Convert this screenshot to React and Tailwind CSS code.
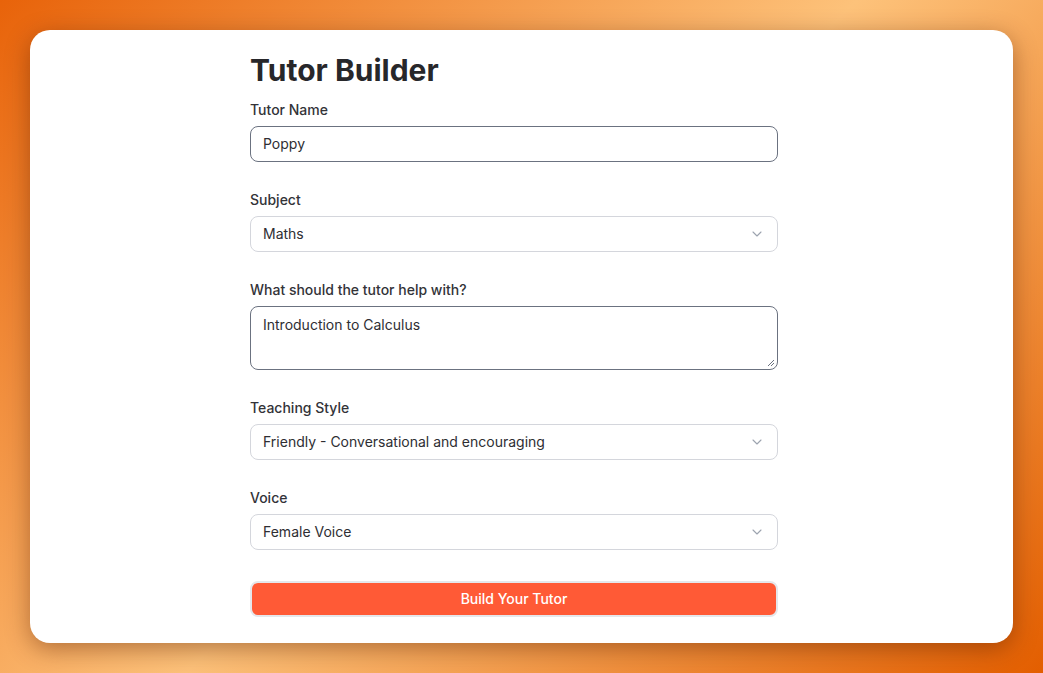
import React from "react";

const font = { fontFamily: "Inter, 'Noto Sans', sans-serif" };

function Chevron() {
  return (
    <svg width="16" height="16" viewBox="0 0 24 24" fill="none" stroke="#9ca3af" strokeWidth="1.6" strokeLinecap="round" strokeLinejoin="round" className="absolute right-[12px] top-1/2 -translate-y-1/2 pointer-events-none">
      <path d="m6 9 6 6 6-6" />
    </svg>
  );
}

function Label({ children }) {
  return <label className="block text-sm leading-5 font-medium text-[#333338] mb-1.5">{children}</label>;
}

function SelectBox({ value }) {
  return (
    <div className="relative h-9 w-full rounded-lg border border-[#d4d6dc] bg-white flex items-center px-3 text-sm text-[#2e2e33]">
      {value}
      <Chevron />
    </div>
  );
}

export default function App() {
  return (
    <div className="w-[1043px] h-[673px] overflow-hidden bg-[linear-gradient(135deg,#e8630a_0%,#fdc27a_50%,#e35e00_100%)] p-[30px]" style={font}>
      <div className="h-[613px] w-[983px] bg-white rounded-[20px] shadow-[0_6px_24px_rgba(90,30,0,0.45)] overflow-hidden flex justify-center pr-[15px] pt-[22px]">
        <div className="w-[528px]">
          <h1 className="text-[30px] leading-9 font-bold text-[#27272a] mb-3">Tutor Builder</h1>
          <div className="flex flex-col gap-7">
            <div>
              <Label>Tutor Name</Label>
              <div className="h-9 w-full rounded-lg border border-[#6b7280] bg-white flex items-center px-3 text-sm text-[#2e2e33]">Poppy</div>
            </div>
            <div>
              <Label>Subject</Label>
              <SelectBox value="Maths" />
            </div>
            <div>
              <Label>What should the tutor help with?</Label>
              <div className="relative h-16 w-full rounded-lg border border-[#6b7280] bg-white px-3 pt-[8px] text-sm leading-5 text-[#2e2e33]">
                Introduction to Calculus
                <svg width="8" height="8" viewBox="0 0 8 8" className="absolute right-[2px] bottom-[2px]" stroke="#6b7280" strokeWidth="1">
                  <path d="M7 1 L1 7 M7 4 L4 7" />
                </svg>
              </div>
            </div>
            <div>
              <Label>Teaching Style</Label>
              <SelectBox value="Friendly - Conversational and encouraging" />
            </div>
            <div>
              <Label>Voice</Label>
              <SelectBox value="Female Voice" />
            </div>
            <button className="mt-[3px] h-9 w-full rounded-lg border-2 border-[#e5e7eb] bg-[#ff5a36] text-white text-sm font-medium">Build Your Tutor</button>
          </div>
        </div>
      </div>
    </div>
  );
}
